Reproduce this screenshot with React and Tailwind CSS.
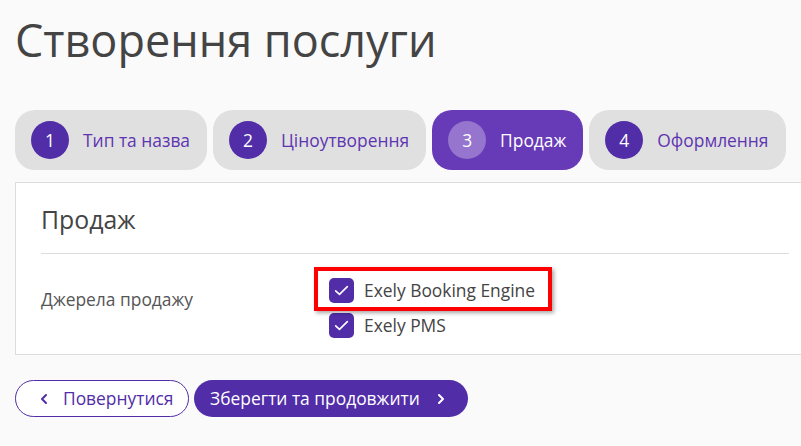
import React from 'react';

const steps = [
  { n: 1, label: 'Тип та назва' },
  { n: 2, label: 'Ціноутворення' },
  { n: 3, label: 'Продаж', active: true },
  { n: 4, label: 'Оформлення' },
];

const Check = () => (
  <span className="w-[25px] h-[25px] rounded-[5px] bg-[#512da8] flex items-center justify-center shrink-0">
    <svg width="17" height="17" viewBox="0 0 16 16" fill="none">
      <path d="M2.5 8.3l3.6 3.4 7.4-7.4" stroke="#fff" strokeWidth="1.5" strokeLinecap="round" strokeLinejoin="round" />
    </svg>
  </span>
);

export default function App() {
  return (
    <div className="w-[801px] h-[446px] overflow-hidden bg-[#fafafa] font-['Open_Sans',sans-serif] text-[#444]">
      {/* Page title */}
      <h1 className="pl-[15px] pt-[10px] text-[45px] leading-[60px] text-[#444]">Створення послуги</h1>

      {/* Steps */}
      <div className="flex gap-[6px] pl-[15px] mt-[40px]">
        {steps.map((s) => (
          <div
            key={s.n}
            className={`h-[60px] rounded-[20px] flex items-center pl-[16px] pr-[17px] gap-[14px] ${
              s.active ? 'bg-[#673ab7] text-white' : 'bg-[#e0e0e0] text-[#5e35b1]'
            }`}
          >
            <span
              className={`w-[38px] h-[38px] rounded-full flex items-center justify-center text-[17.4px] text-white ${
                s.active ? 'bg-[#9575cd]' : 'bg-[#512da8]'
              }`}
            >
              {s.n}
            </span>
            <span className="text-[17.4px]">{s.label}</span>
          </div>
        ))}
      </div>

      {/* Card */}
      <div className="ml-[15px] mt-[12px] w-[800px] h-[173px] bg-white border border-[#ddd] px-[25px]">
        <h2 className="text-[24.8px] leading-[32px] pt-[20px] pb-[18px] border-b border-[#ddd] text-[#444]">Продаж</h2>
        <div className="flex pt-[24px]">
          <div className="w-[288px] text-[17.4px] pt-[8px] text-[#555]">Джерела продажу</div>
          <div className="relative flex flex-col gap-[10px]">
            <label className="flex items-center gap-[10px] text-[17.4px] leading-[25px] text-[#444]">
              <Check />
              Exely Booking Engine
            </label>
            <label className="flex items-center gap-[10px] text-[17.4px] leading-[25px] text-[#444]">
              <Check />
              Exely PMS
            </label>
            {/* annotation highlight */}
            <div className="absolute left-[-15px] top-[-11px] w-[238px] h-[44px] border-[4px] border-[#f00] shadow-[2px_2px_4px_rgba(0,0,0,0.35)] pointer-events-none" />
          </div>
        </div>
      </div>

      {/* Buttons */}
      <div className="flex gap-[5px] pl-[15px] mt-[25px]">
        <button className="h-[37px] w-[174px] rounded-full border border-[#512da8] bg-white text-[#512da8] flex items-center pl-[24px] gap-[15px] text-[17.4px]">
          <svg width="8" height="12" viewBox="0 0 8 12" fill="none">
            <path d="M6 2L2 6l4 4" stroke="#512da8" strokeWidth="2" strokeLinecap="round" strokeLinejoin="round" />
          </svg>
          Повернутися
        </button>
        <button className="h-[37px] w-[274px] rounded-full bg-[#512da8] text-white flex items-center pl-[16px] gap-[17px] text-[17.4px]">
          Зберегти та продовжити
          <svg width="8" height="12" viewBox="0 0 8 12" fill="none">
            <path d="M2 2l4 4-4 4" stroke="#fff" strokeWidth="2" strokeLinecap="round" strokeLinejoin="round" />
          </svg>
        </button>
      </div>
    </div>
  );
}
